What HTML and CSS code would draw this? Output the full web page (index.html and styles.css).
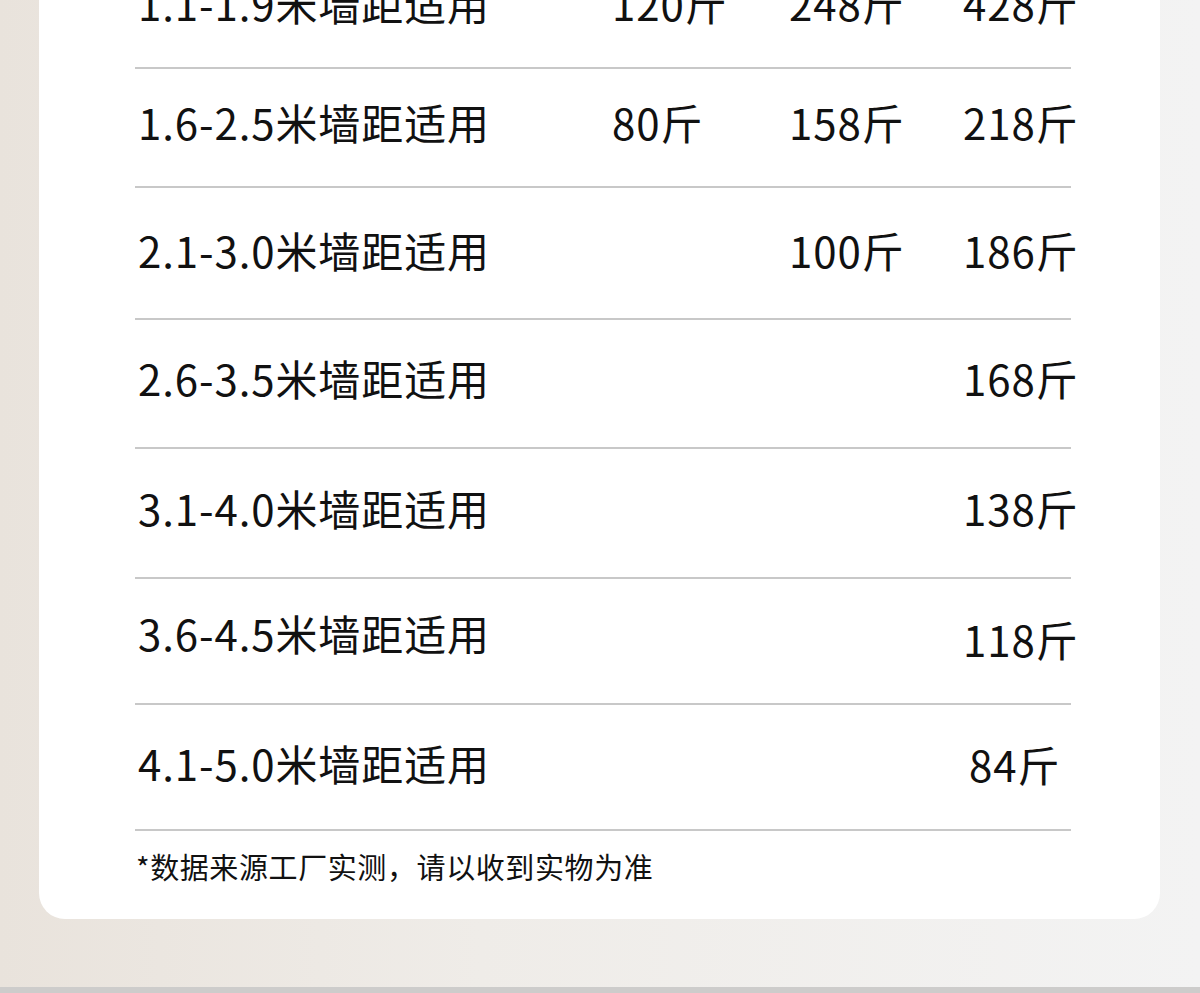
FILE: index.html
```html
<!DOCTYPE html>
<html lang="zh-CN">
<head>
<meta charset="utf-8">
<title>墙距承重表</title>
<link rel="stylesheet" href="styles.css">
</head>
<body>
<div class="page">
  <div class="card">
    <div class="table">
      <div class="row r1"><span class="label">1.1-1.9米墙距适用</span><span class="val">120斤</span><span class="val">248斤</span><span class="val">428斤</span></div>
      <div class="row r2"><span class="label">1.6-2.5米墙距适用</span><span class="val">80斤</span><span class="val">158斤</span><span class="val">218斤</span></div>
      <div class="row r3"><span class="label">2.1-3.0米墙距适用</span><span class="val"></span><span class="val">100斤</span><span class="val">186斤</span></div>
      <div class="row r4"><span class="label">2.6-3.5米墙距适用</span><span class="val"></span><span class="val"></span><span class="val">168斤</span></div>
      <div class="row r5"><span class="label">3.1-4.0米墙距适用</span><span class="val"></span><span class="val"></span><span class="val">138斤</span></div>
      <div class="row r6"><span class="label">3.6-4.5米墙距适用</span><span class="val"></span><span class="val"></span><span class="val low">118斤</span></div>
      <div class="row r7"><span class="label">4.1-5.0米墙距适用</span><span class="val"></span><span class="val"></span><span class="val nudge">84斤</span></div>
    </div>
    <p class="note">*数据来源工厂实测，请以收到实物为准</p>
  </div>
  <div class="bottom-bar"></div>
</div>
</body>
</html>
```

FILE: styles.css
```css
html, body {
  margin: 0;
  padding: 0;
}
body {
  width: 1200px;
  height: 993px;
  overflow: hidden;
  font-family: "Noto Sans CJK SC", "Noto Sans", sans-serif;
  color: #111;
}
.page {
  height: 993px;
  display: flex;
  flex-direction: column;
  background: linear-gradient(90deg, #e9e3dc 0%, #efece8 40%, #f3f3f3 100%);
}
.card {
  margin: -51px 40px 0 39px;
  background: #fff;
  border-radius: 0 0 26px 26px;
  padding: 0 89px 0 96px;
  height: 970px;
  box-sizing: border-box;
}
.table {
  display: flex;
  flex-direction: column;
}
.row {
  display: grid;
  grid-template-columns: 477px 177px 174px 1fr;
  align-items: center;
  border-bottom: 2px solid #c8c8c8;
  box-sizing: border-box;
  font-size: 42px;
  line-height: 1;
  letter-spacing: 0.9px;
}
.r1 { height: 120px; padding-bottom: 11px; }
.r2 { height: 119px; padding-bottom: 11px; }
.r3 { height: 132px; padding-bottom: 7px; }
.r4 { height: 129px; padding-bottom: 11px; }
.r5 { height: 130px; padding-bottom: 11px; }
.r6 { height: 126px; padding-bottom: 16px; }
.r7 { height: 126px; padding-bottom: 8px; }
.label {
  white-space: nowrap;
  padding-left: 3px;
}
.val {
  white-space: nowrap;
}
.low {
  position: relative;
  top: 6px;
}
.nudge {
  position: relative;
  top: 1px;
  margin-left: 6px;
}
.note {
  margin: 20px 0 0 1px;
  font-size: 29px;
  line-height: 30px;
  letter-spacing: 0.6px;
  color: #111;
}
.bottom-bar {
  margin-top: auto;
  height: 6px;
  background: #cdcccb;
}
```
